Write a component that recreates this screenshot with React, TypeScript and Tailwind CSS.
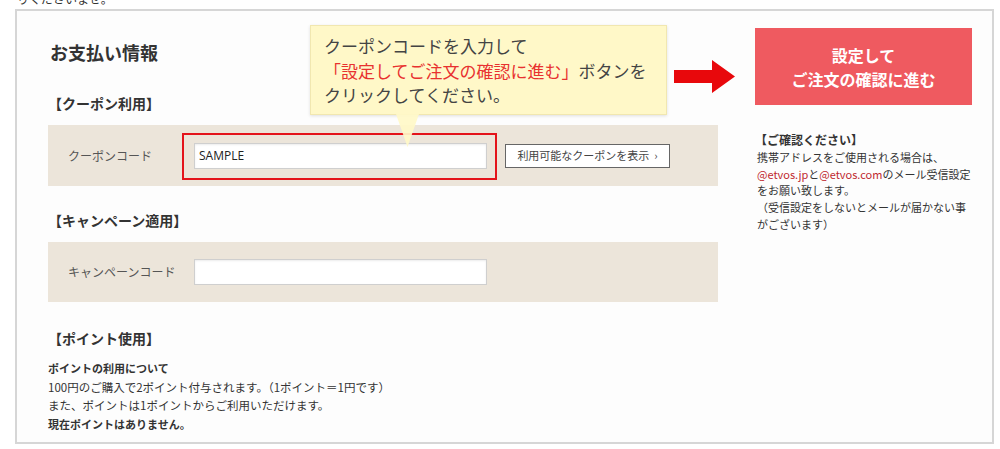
import React from "react";

const FONT = '"Noto Sans CJK JP", "Noto Sans", "Liberation Sans", sans-serif';

export default function App() {
  return (
    <div
      className="relative w-[1000px] h-[449px] overflow-hidden bg-white text-[#333]"
      style={{ fontFamily: FONT }}
    >
      {/* cut-off line at very top */}
      <div className="h-[9px] overflow-hidden pl-[17px]">
        <div className="text-[12px] leading-[12px] mt-[-7px] text-[#333]">りくださいませ。</div>
      </div>

      {/* main box */}
      <div className="ml-[15px] w-[979px] h-[435px] border-2 border-[#d6d6d6] bg-[#fdfdfd] flex items-start">
        {/* left column */}
        <div className="pl-[31px] pt-[29px] w-[701px]">
          <h2 className="text-[18px] leading-[24px] font-bold text-[#333] pl-[2px]">お支払い情報</h2>

          <h3 className="mt-[29px] text-[14px] leading-[20px] font-bold text-[#333]">【クーポン利用】</h3>
          <div className="mt-[12px] w-[670px] h-[61px] bg-[#ece5da] flex items-center pl-[20px]">
            <div className="w-[126px] text-[12px] text-[#555]">クーポンコード</div>
            <div className="relative">
              <div className="absolute left-[-12px] top-[-10px] right-[-10px] bottom-[-11px] border-2 border-[#e4141b]" />
              <div className="relative w-[293px] h-[26px] bg-white border border-[#cfcfcf] shadow-[inset_0_1px_2px_rgba(0,0,0,0.08)] flex items-center pl-[4px] text-[12px] text-[#222]" style={{ fontFamily: '"Open Sans", "Noto Sans", sans-serif' }}>
                SAMPLE
              </div>
            </div>
            <div className="ml-[18px] w-[165px] h-[24px] bg-white border border-[#666] flex items-center justify-center text-[11px] text-[#444]">
              利用可能なクーポンを表示&nbsp;&nbsp;›
            </div>
          </div>

          <h3 className="mt-[24px] text-[14px] leading-[20px] font-bold text-[#333]">【キャンペーン適用】</h3>
          <div className="mt-[12px] w-[670px] h-[60px] bg-[#ece5da] flex items-center pl-[20px]">
            <div className="w-[126px] text-[12px] text-[#555]">キャンペーンコード</div>
            <div className="w-[293px] h-[26px] bg-white border border-[#cfcfcf] shadow-[inset_0_1px_2px_rgba(0,0,0,0.08)]" />
          </div>

          <h3 className="mt-[26px] text-[14px] leading-[20px] font-bold text-[#333]">【ポイント使用】</h3>
          <div className="mt-[11px] text-[11.5px] leading-[18.5px] text-[#333]">
            <div className="font-bold text-[11px]">ポイントの利用について</div>
            <div>100円のご購入で2ポイント付与されます。（1ポイント＝1円です）</div>
            <div>また、ポイントは1ポイントからご利用いただけます。</div>
            <div className="font-bold text-[11px]">現在ポイントはありません。</div>
          </div>
        </div>

        {/* right column */}
        <div className="ml-[37px] pt-[17px] w-[217px]">
          <div className="h-[77px] bg-[#ef5a60] flex flex-col items-center justify-center text-white font-bold text-[16px] leading-[24px]">
            <div>設定して</div>
            <div>ご注文の確認に進む</div>
          </div>
          <div className="mt-[27px] text-[11px] leading-[16.75px] text-[#333]">
            <div className="font-bold text-[12px]">【ご確認ください】</div>
            <div className="pl-[2px]">
              携帯アドレスをご使用される場合は、
              <br />
              <span className="text-[#c0282e]">@etvos.jp</span>と<span className="text-[#c0282e]">@etvos.com</span>のメール受信設定
              <br />
              をお願い致します。
              <br />
              （受信設定をしないとメールが届かない事
              <br />
              がございます）
            </div>
          </div>
        </div>
      </div>

      {/* tooltip annotation */}
      <div className="absolute left-[310px] top-[25px] w-[357px] h-[90px] bg-[#fff8c8] border border-[#f1e7b0] shadow-[0_1px_3px_rgba(0,0,0,0.12)] pl-[13px] pt-[8px] text-[17px] leading-[24.5px] text-[#444]">
        <div>クーポンコードを入力して</div>
        <div>
          <span className="text-[#e8312f]">「設定してご注文の確認に進む」</span>ボタンを
        </div>
        <div>クリックしてください。</div>
      </div>
      <svg className="absolute left-[396px] top-[114px]" width="24" height="34" viewBox="0 0 24 34">
        <polygon points="0,0 23,0 11.5,33" fill="#fff8c8" fillOpacity="0.92" />
      </svg>

      {/* red arrow */}
      <svg className="absolute left-[674px] top-[60px]" width="62" height="33" viewBox="0 0 62 33">
        <polygon points="0,10 38,10 38,0 61,16.5 38,33 38,23 0,23" fill="#e8080c" />
      </svg>
    </div>
  );
}
